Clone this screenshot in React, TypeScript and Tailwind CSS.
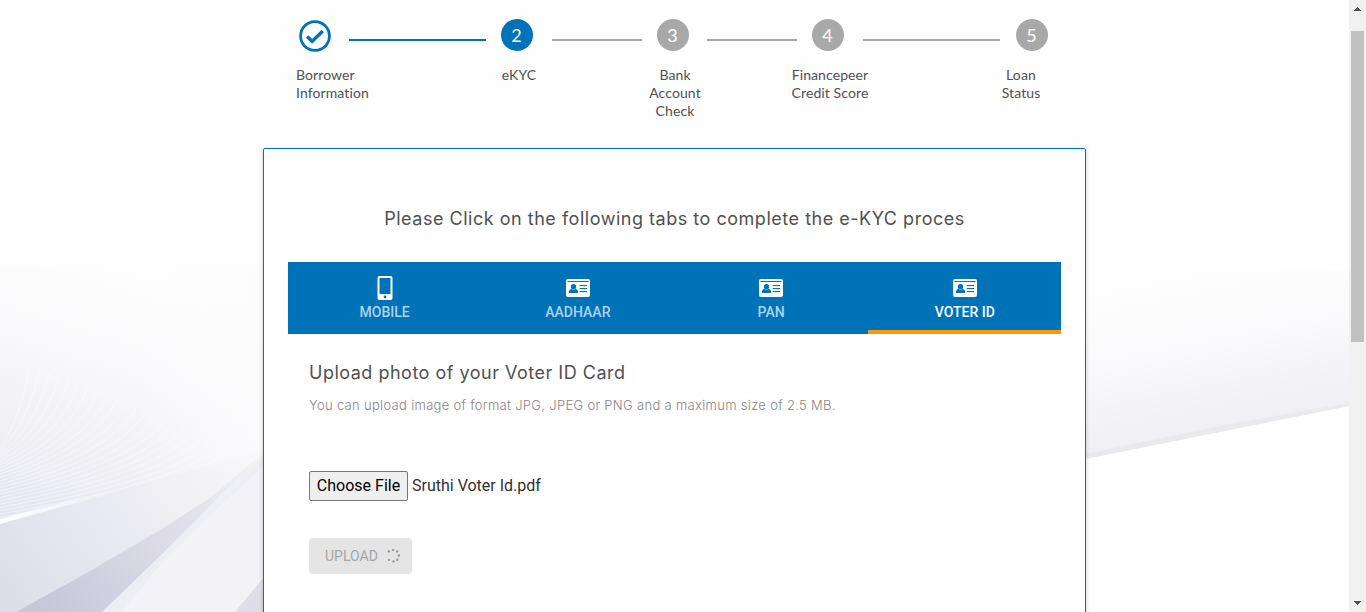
import React from "react";

const steps = [
  { n: 2, active: true, line: "mr-[15px] ml-[18px] w-[137px] bg-[#0072b8]" },
  { n: 3, active: false, line: "mr-[15px] ml-[19px] w-[90px] bg-[#a8a8a8]" },
  { n: 4, active: false, line: "mr-[15px] ml-[18px] w-[90px] bg-[#a8a8a8]" },
  { n: 5, active: false, line: "mr-[16px] ml-[19px] w-[137px] bg-[#a8a8a8]" },
];

const labels = [
  { lines: ["Borrower", "Information"], cls: "w-[74px] text-left" },
  { lines: ["eKYC"], cls: "ml-[119px] w-[60px] text-center" },
  { lines: ["Bank", "Account", "Check"], cls: "ml-[96px] w-[60px] text-center" },
  { lines: ["Financepeer", "Credit Score"], cls: "ml-[80px] w-[90px] text-center" },
  { lines: ["Loan", "Status"], cls: "ml-[116px] w-[60px] text-center" },
];

function CheckCircle() {
  return (
    <svg width="32" height="32" viewBox="0 0 32 32" fill="none" stroke="#0072b8" className="mt-px shrink-0">
      <circle cx="16" cy="16" r="14.4" strokeWidth="2.8" />
      <path d="M8.2 16.6 L13.1 21.4 L23.8 10.9" strokeWidth="3.5" />
    </svg>
  );
}

function PhoneIcon() {
  return (
    <svg width="24" height="24" viewBox="0 0 24 24">
      <path
        fill="#fff"
        fillRule="evenodd"
        d="M6.5 0h11A2 2 0 0 1 19.5 2v20a2 2 0 0 1-2 2h-11a2 2 0 0 1-2-2V2a2 2 0 0 1 2-2zM6.5 2v16h11V2zM12 19.6a1.4 1.4 0 1 0 0 2.8 1.4 1.4 0 0 0 0-2.8z"
      />
    </svg>
  );
}

function CardIcon() {
  return (
    <svg width="24" height="24" viewBox="0 0 24 24">
      <rect y="3" width="24" height="18" rx="2" fill="#fff" />
      <g fill="#0072b8">
        <rect x="1.5" y="5" width="21" height="1" />
        <circle cx="7.5" cy="10.8" r="2.7" />
        <path d="M3 17v-1.6c0-1.6 1.2-2.2 2.6-2.4.9.9 2.9.9 3.8 0 1.4.2 2.6.8 2.6 2.4V17z" />
        <rect x="13.7" y="9" width="7.3" height="1.1" />
        <rect x="13.7" y="12" width="7.3" height="1.1" />
        <rect x="13.7" y="15" width="7.3" height="1.1" />
      </g>
    </svg>
  );
}

function Tab({ label, active, phone }: { label: string; active?: boolean; phone?: boolean }) {
  return (
    <div
      className={
        active
          ? "flex w-1/4 flex-col items-center border-b-4 border-[#ff9800] pt-[14px] pl-px text-white"
          : "flex w-1/4 flex-col items-center pt-[14px] text-[#b0d3e9]"
      }
    >
      {phone ? <PhoneIcon /> : <CardIcon />}
      <span className="font-[Roboto,sans-serif] text-[14px] leading-6 font-medium">{label}</span>
    </div>
  );
}

function Backdrop() {
  const waves = Array.from({ length: 22 }, (_, i) => i);
  return (
    <svg width="1349" height="612" className="absolute top-0 left-0 -z-10">
      <defs>
        <linearGradient id="haze" gradientUnits="userSpaceOnUse" x1="140" y1="270" x2="60" y2="525">
          <stop offset="0" stopColor="#fefefe" />
          <stop offset="0.35" stopColor="#f9f9fb" />
          <stop offset="0.7" stopColor="#f1f1f5" />
          <stop offset="1" stopColor="#e6e6f0" />
        </linearGradient>
        <linearGradient id="fade" x1="0" y1="0" x2="1" y2="0">
          <stop offset="0.5" stopColor="#fcfcfd" stopOpacity="0" />
          <stop offset="1" stopColor="#fcfcfd" stopOpacity="0.75" />
        </linearGradient>
        <linearGradient id="plane" gradientUnits="userSpaceOnUse" x1="245" y1="455" x2="20" y2="612">
          <stop offset="0" stopColor="#f8f8fa" />
          <stop offset="0.25" stopColor="#f1f1f5" />
          <stop offset="0.6" stopColor="#e8e8f0" />
          <stop offset="1" stopColor="#dedeea" />
        </linearGradient>
        <linearGradient id="blade" gradientUnits="userSpaceOnUse" x1="264" y1="455" x2="50" y2="612">
          <stop offset="0" stopColor="#f4f4f7" />
          <stop offset="0.35" stopColor="#e2e1ea" />
          <stop offset="1" stopColor="#c8c7da" />
        </linearGradient>
        <linearGradient id="right" gradientUnits="userSpaceOnUse" x1="1190" y1="270" x2="1222" y2="430">
          <stop offset="0" stopColor="#fefefe" />
          <stop offset="0.45" stopColor="#fafafc" />
          <stop offset="1" stopColor="#efeff4" />
        </linearGradient>
        <linearGradient id="ray" x1="0" y1="0" x2="1" y2="0">
          <stop offset="0" stopColor="#fff" stopOpacity="1" />
          <stop offset="1" stopColor="#fff" stopOpacity="0" />
        </linearGradient>
      </defs>
      <rect width="1349" height="612" fill="#fefefe" />
      <path d="M0 265H264V455L0 523Z" fill="url(#haze)" />
      {waves.map((i) => (
        <path
          key={i}
          d={`M0 ${448 + i * 3.3}Q${20 + i * 8} ${420 + i * 3.2} ${30 + i * 9.6} ${365 + i * 4}`}
          fill="none"
          stroke="#fff"
          strokeWidth="0.9"
          opacity="0.5"
        />
      ))}
      <path d="M0 265H264V455L0 523Z" fill="url(#fade)" />
      <path d="M0 523L264 450V612H0Z" fill="url(#plane)" />
      <path d="M0 519Q60 502 130 489Q60 507 0 524Z" fill="url(#ray)" />
      <path d="M264 452L210 498L160 530L90 571L16 612H105L160 560L220 495L264 458Z" fill="url(#blade)" />
      <path d="M264 457L218 498L158 558L102 612H264Z" fill="#eeeef5" />
      <path d="M264 466L210 515L160 565L122 612H264Z" fill="#f3f2f7" opacity="0.8" />
      <path d="M264 577L235 612H264Z" fill="#dedde8" />
      <path d="M1085 270H1349V406L1085 459Z" fill="url(#right)" />
      <path d="M1085 454L1215 427L1349 403V406L1085 459Z" fill="#e9e9eb" opacity="0.8" />
    </svg>
  );
}

function Spinner() {
  const dots = [
    [6, 0.9], [10.1, 2.4], [11.9, 6.5], [10.3, 10.7], [6.6, 12.4], [2, 10.9], [0.7, 6.5], [1.9, 2.4],
  ];
  return (
    <svg width="14" height="14" viewBox="0 0 14 14" fill="#989898">
      {dots.map(([x, y], i) => (
        <circle key={i} cx={x} cy={y} r={i === 6 ? 0.3 : 1.2} />
      ))}
    </svg>
  );
}

function Scrollbar() {
  return (
    <div className="flex h-full w-[17px] shrink-0 flex-col items-center bg-[#f1f1f1]">
      <svg width="17" height="31" viewBox="0 0 17 31" shapeRendering="crispEdges">
        <path d="M8 7h1v1h1v1h1v1h1v1H5v-1h1V9h1V8h1z" fill="#505050" />
      </svg>
      <div className="h-[311px] w-[13px] bg-[#c1c1c1]" />
      <svg width="17" height="17" viewBox="0 0 17 17" shapeRendering="crispEdges" className="mt-auto">
        <path d="M5 6h7v1h-1v1h-1v1H9v1H8V9H7V8H6V7H5z" fill="#505050" />
      </svg>
    </div>
  );
}

export default function App() {
  return (
    <div className="flex h-[612px] w-[1366px] overflow-hidden">
      <main className="relative isolate flex min-w-0 flex-1 flex-col overflow-hidden">
        <Backdrop />
        <div className="flex h-[66px] shrink-0 items-start pt-[19px] pl-[299px]">
          <CheckCircle />
          {steps.map((s) => (
            <React.Fragment key={s.n}>
              <div className={`mt-5 h-0.5 shrink-0 ${s.line}`} />
              <div
                className={`flex size-8 shrink-0 items-center justify-center rounded-full pt-px pr-px font-[Lato,sans-serif] text-[18px] text-white ${
                  s.active ? "bg-[#0072b8]" : "bg-[#a8a8a8]"
                }`}
              >
                {s.n}
              </div>
            </React.Fragment>
          ))}
        </div>
        <div className="flex h-[82px] shrink-0 pl-[296px] font-[Lato,sans-serif] text-[14px] leading-[18px] tracking-[0.1px] text-[#505050]">
          {labels.map((l) => (
            <div key={l.lines[0]} className={`shrink-0 ${l.cls}`}>
              {l.lines.map((t) => (
                <div key={t} className="whitespace-nowrap">{t}</div>
              ))}
            </div>
          ))}
        </div>
        <section className="ml-[263px] h-[480px] w-[823px] shrink-0 rounded-[2px] border border-[#0072b8] bg-white px-6 pt-[56px] shadow-[0_1px_4px_rgba(0,0,0,0.2)]">
          <h1 className="h-[57px] text-center font-[Inter,sans-serif] text-[18px] leading-[27px] tracking-[0.52px] whitespace-nowrap text-[#505050]">
            Please Click on the following tabs to complete the e-KYC proces
          </h1>
          <nav className="flex h-[72px] bg-[#0072b8]">
            <Tab label="MOBILE" phone />
            <Tab label="AADHAAR" />
            <Tab label="PAN" />
            <Tab label="VOTER ID" active />
          </nav>
          <div className="flex flex-col items-start pt-[25px] pl-[21px]">
            <h2 className="font-[Inter,sans-serif] text-[18px] leading-[27px] tracking-[0.5px] whitespace-nowrap text-[#505050]">
              Upload photo of your Voter ID Card
            </h2>
            <p className="mt-[9px] font-[Inter,sans-serif] text-[13px] leading-5 font-light tracking-[0.31px] whitespace-nowrap text-[#858585]">
              You can upload image of format JPG, JPEG or PNG and a maximum size of 2.5 MB.
            </p>
            <div className="mt-[56px] flex items-center gap-1 font-[Roboto,sans-serif] text-[16px] text-[#303030]">
              <button className="h-[30px] w-[99px] rounded-[2px] border border-[#767676] bg-[#efefef] whitespace-nowrap text-black">
                Choose File
              </button>
              <span>Sruthi Voter Id.pdf</span>
            </div>
            <button className="mt-[37px] flex h-9 w-[103px] items-center rounded-[4px] bg-[#e4e4e4] pl-4 font-[Roboto,sans-serif] text-[14px] font-normal text-[#a6a6a6]">
              <span className="mr-[9px]">UPLOAD</span>
              <Spinner />
            </button>
          </div>
        </section>
      </main>
      <Scrollbar />
    </div>
  );
}
